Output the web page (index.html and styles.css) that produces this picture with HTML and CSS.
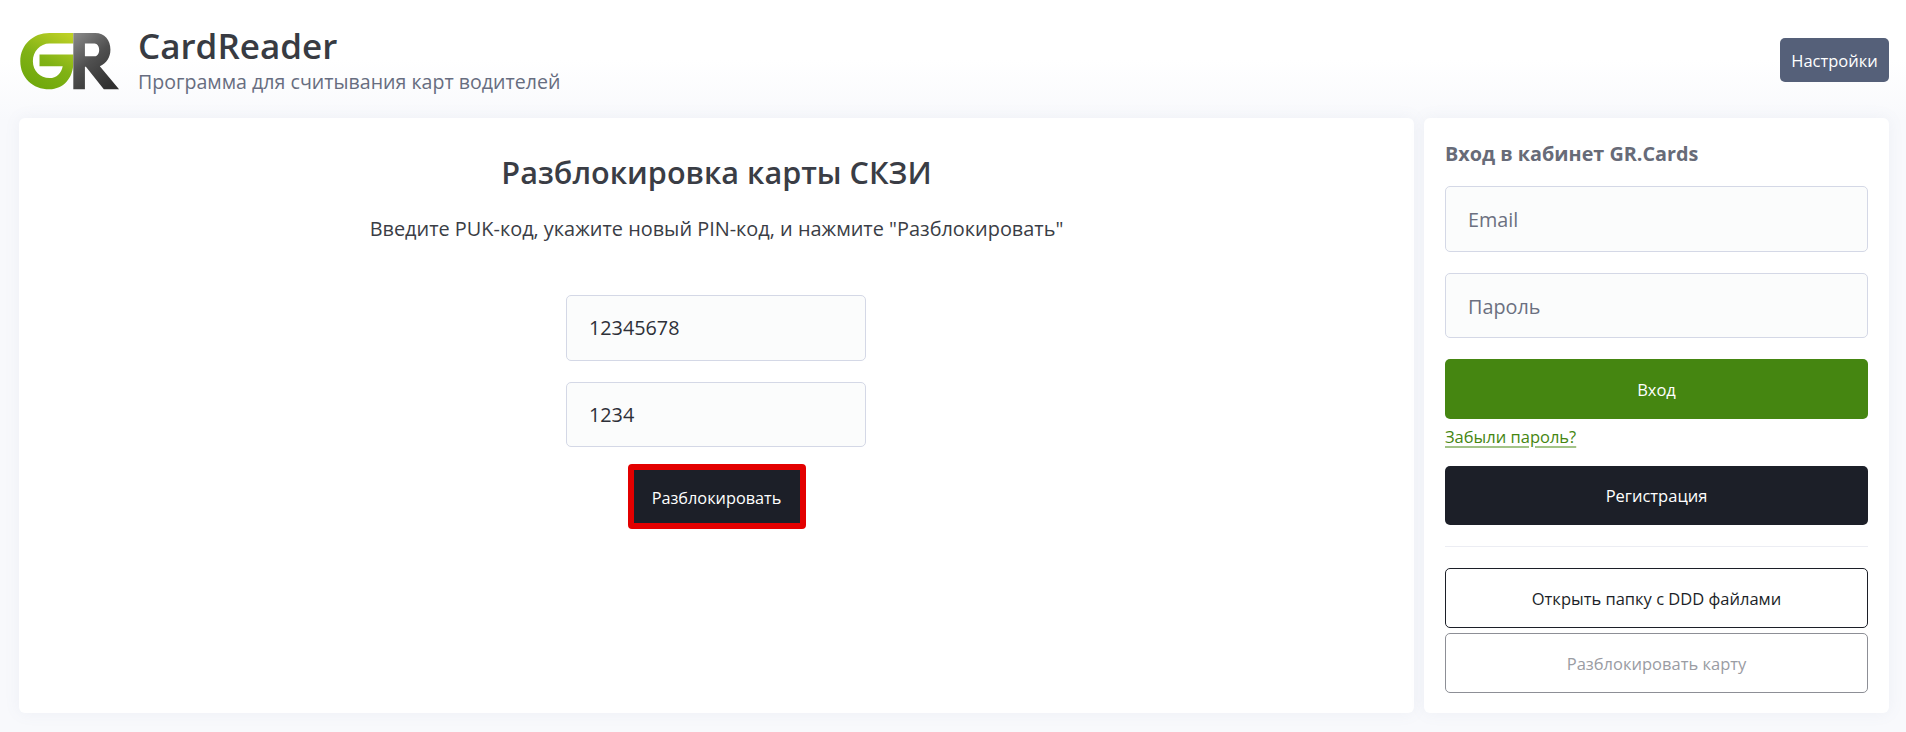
FILE: index.html
```html
<!DOCTYPE html>
<html lang="ru">
<head>
    <meta charset="UTF-8">
    <title>CardReader</title>
    <link rel="stylesheet" href="styles.css">
</head>
<body>
    <header class="topbar">
        <div class="brand">
            <svg class="logo" viewBox="30 40 300 172" aria-label="GR">
                <defs>
                    <linearGradient id="logoGreen" x1="0.85" y1="0" x2="0.35" y2="1">
                        <stop offset="0" stop-color="#bdd025"/>
                        <stop offset="0.55" stop-color="#80b215"/>
                        <stop offset="1" stop-color="#6fa80c"/>
                    </linearGradient>
                    <linearGradient id="logoDark" x1="0" y1="0" x2="0.7" y2="1">
                        <stop offset="0" stop-color="#8c8c8c"/>
                        <stop offset="0.5" stop-color="#505050"/>
                        <stop offset="1" stop-color="#303030"/>
                    </linearGradient>
                </defs>
                <path fill="url(#logoGreen)" fill-rule="evenodd" d="M190 40H118C68 40 30 76 30 125C30 174 68 210 118 210C160 210 190 176 190 130V105H88V140H158C154 160 140 176 118 176C90 176 68 154 68 125C68 96 90 72 118 72H190Z"/>
                <path fill="url(#logoDark)" fill-rule="evenodd" d="M190 40H256C285 40 302 62 302 90C302 114 290 132 270 140L328 210H282L228 142H225V210H190ZM225 72V110H254C264 110 268 100 268 91C268 82 263 72 254 72Z"/>
            </svg>
            <div>
                <div class="brand-name">CardReader</div>
                <div class="brand-sub">Программа для считывания карт водителей</div>
            </div>
        </div>
        <button class="btn-settings">Настройки</button>
    </header>

    <main class="layout">
        <section class="card unlock">
            <h1>Разблокировка карты СКЗИ</h1>
            <p>Введите PUK-код, укажите новый PIN-код, и нажмите "Разблокировать"</p>
            <input class="field field-short" type="text" value="12345678">
            <input class="field field-short" type="text" value="1234">
            <button class="btn-unlock">Разблокировать</button>
        </section>

        <aside class="card side">
            <h2>Вход в кабинет GR.Cards</h2>
            <input class="field" type="text" placeholder="Email">
            <input class="field" type="password" placeholder="Пароль">
            <button class="btn btn-green">Вход</button>
            <a class="forgot" href="#">Забыли пароль?</a>
            <button class="btn btn-dark">Регистрация</button>
            <hr>
            <button class="btn btn-outline">Открыть папку с DDD файлами</button>
            <button class="btn btn-outline btn-disabled" disabled>Разблокировать карту</button>
        </aside>
    </main>
</body>
</html>
```

FILE: styles.css
```css
* {
    box-sizing: border-box;
}
html, body {
    height: 100%;
}
body {
    margin: 0;
    height: 732px;
    overflow: hidden;
    background: linear-gradient(#ffffff 60px, #f8f9fc 120px);
    font-family: "Open Sans", "Noto Sans", sans-serif;
    color: #3a3d45;
}
.topbar {
    height: 118px;
    padding: 33px 17px 0 20px;
    display: flex;
    justify-content: space-between;
    align-items: flex-start;
}
.brand {
    display: flex;
    gap: 18px;
}
.logo {
    width: 100px;
    height: 57px;
    flex-shrink: 0;
}
.brand-name {
    font-size: 35px;
    font-weight: 600;
    line-height: 42px;
    margin-top: -8px;
    color: #383b42;
}
.brand-sub {
    margin-top: 1px;
    font-size: 19.6px;
    line-height: 27px;
    color: #676d80;
}
.btn-settings {
    margin-top: 5px;
    height: 44px;
    width: 109px;
    padding: 0;
    border: none;
    border-radius: 5px;
    background: #556079;
    color: #fff;
    font: 16.5px "Open Sans", sans-serif;
}
.layout {
    display: flex;
    gap: 10px;
    height: 595px;
    padding: 0 17px 0 19px;
}
.card {
    background: #fff;
    border-radius: 6px;
    box-shadow: 0 0 16px rgba(120, 130, 170, 0.08);
}
.unlock {
    flex: 1;
    display: flex;
    flex-direction: column;
    align-items: center;
    padding-top: 33px;
}
.unlock h1 {
    margin: 0 0 22px;
    font-size: 30.6px;
    line-height: 42px;
    font-weight: 600;
    color: #3a3d45;
}
.unlock p {
    margin: 0 0 53px;
    font-size: 19.9px;
    line-height: 27px;
}
.side {
    width: 465px;
    padding: 22px 21px 20px;
    display: flex;
    flex-direction: column;
}
.side h2 {
    margin: 0 0 19px;
    font-size: 19.8px;
    line-height: 27px;
    font-weight: 700;
    color: #676b78;
}
.field {
    display: block;
    width: 100%;
    height: 65.5px;
    margin-bottom: 21px;
    padding: 0 22px;
    border: 1px solid #d4d8e6;
    border-radius: 5px;
    background: #fbfcfc;
    color: #2e3038;
    font: 19.8px "Open Sans", sans-serif;
}
.side .field {
    padding-top: 2px;
}
.field::placeholder {
    color: #6b7080;
    opacity: 1;
}
.field-short {
    width: 300px;
    margin-right: 1px;
}
.btn-unlock {
    margin-top: -4px;
    width: 178px;
    height: 65px;
    padding: 2px 0 0;
    border: 6px solid #e30000;
    border-radius: 4px;
    background: #1c1f28;
    color: #fff;
    font: 16.3px "Open Sans", sans-serif;
}
.btn {
    display: block;
    width: 100%;
    height: 60px;
    padding: 0;
    border: none;
    border-radius: 5px;
    font: 16.5px "Open Sans", sans-serif;
}
.btn-green {
    background: #458611;
    color: #fff;
}
.forgot {
    display: block;
    align-self: flex-start;
    margin: 6px 0 17px;
    font-size: 16.5px;
    line-height: 24px;
    color: #458611;
    text-decoration-color: #a2c388;
    text-decoration-thickness: 2px;
    text-underline-offset: 3px;
}
.btn-dark {
    height: 59px;
    background: #1c1f28;
    color: #fff;
}
.side hr {
    width: 100%;
    margin: 21px 0;
    border: none;
    border-top: 1px solid #ecedf3;
}
.btn-outline {
    background: #fff;
    border: 1px solid #1c1f28;
    color: #1c1f28;
}
.btn-disabled {
    margin-top: 5px;
    border-color: #8d8f96;
    color: #9a9ca3;
}
```
